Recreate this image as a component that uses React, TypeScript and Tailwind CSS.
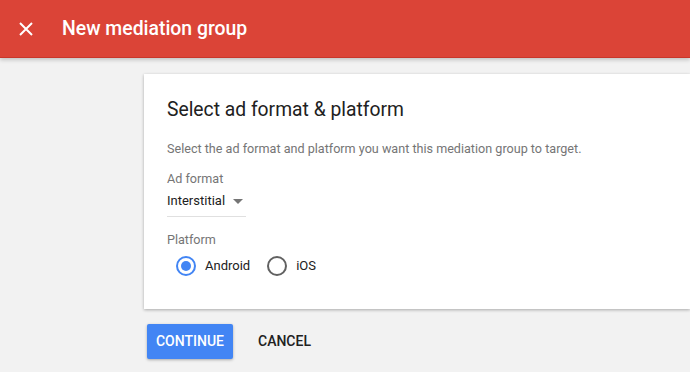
import { useState } from 'react';

export default function App() {
  const [platform, setPlatform] = useState<'android' | 'ios'>('android');

  return (
    <div className="h-[372px] w-[690px] overflow-hidden bg-[#f2f2f2] font-['Roboto',sans-serif]">
      {/* header */}
      <div className="relative z-10 flex h-[58px] items-center border-b border-[#c9362a] bg-[#db4437] shadow-[0_2px_4px_rgba(0,0,0,0.2)]">
        <button className="ml-[18px] flex h-4 w-4 items-center justify-center text-white">
          <svg width="16" height="16" viewBox="0 0 16 16">
            <path d="M2 2L14 14M14 2L2 14" stroke="white" strokeWidth="2" />
          </svg>
        </button>
        <h1 className="ml-[28px] text-[19.4px] font-medium text-white">New mediation group</h1>
      </div>

      <div className="pl-[144px] pt-[16px]">
        {/* card */}
        <div className="h-[235px] bg-white pl-[23px] pt-[22px] shadow-[0_1px_3px_rgba(0,0,0,0.3)]">
          <h2 className="text-[19.3px] leading-[28px] text-[#212121]">Select ad format &amp; platform</h2>
          <p className="mt-[17px] text-[12.6px] leading-[16px] text-[#757575]">
            Select the ad format and platform you want this mediation group to target.
          </p>
          <div className="mt-[14px] text-[12.6px] leading-[16px] text-[#757575]">Ad format</div>
          <div className="mt-[5px] flex w-[79px] items-center border-b border-[#e0e0e0] pb-[6px]">
            <span className="text-[13px] leading-[18px] text-[#212121]">Interstitial</span>
            <svg className="ml-[8px]" width="10" height="5" viewBox="0 0 10 5">
              <path d="M0 0L10 0L5 5Z" fill="#757575" />
            </svg>
          </div>
          <div className="mt-[15px] text-[12.6px] leading-[16px] text-[#757575]">Platform</div>
          <div className="mt-[8px] flex items-center pl-[9px]">
            <Radio label="Android" checked={platform === 'android'} onClick={() => setPlatform('android')} />
            <div className="w-[17px]" />
            <Radio label="iOS" checked={platform === 'ios'} onClick={() => setPlatform('ios')} />
          </div>
        </div>

        <div className="mt-[15px] flex items-center">
          <button className="ml-[3px] h-[35px] w-[86px] rounded-[2px] bg-[#4285f4] text-[14px] font-medium text-white shadow-[0_1px_3px_rgba(0,0,0,0.3)]">
            CONTINUE
          </button>
          <button className="ml-[25px] text-[14px] font-medium text-[#212121]">CANCEL</button>
        </div>
      </div>
    </div>
  );
}

function Radio({ label, checked, onClick }: { label: string; checked: boolean; onClick: () => void }) {
  return (
    <button onClick={onClick} className="flex items-center">
      <span
        className={
          checked
            ? 'flex h-[20px] w-[20px] items-center justify-center rounded-full border-2 border-[#4285f4]'
            : 'flex h-[20px] w-[20px] items-center justify-center rounded-full border-2 border-[#616161]'
        }
      >
        {checked && <span className="h-[10px] w-[10px] rounded-full bg-[#4285f4]" />}
      </span>
      <span className="ml-[9px] text-[13px] text-[#212121]">{label}</span>
    </button>
  );
}
